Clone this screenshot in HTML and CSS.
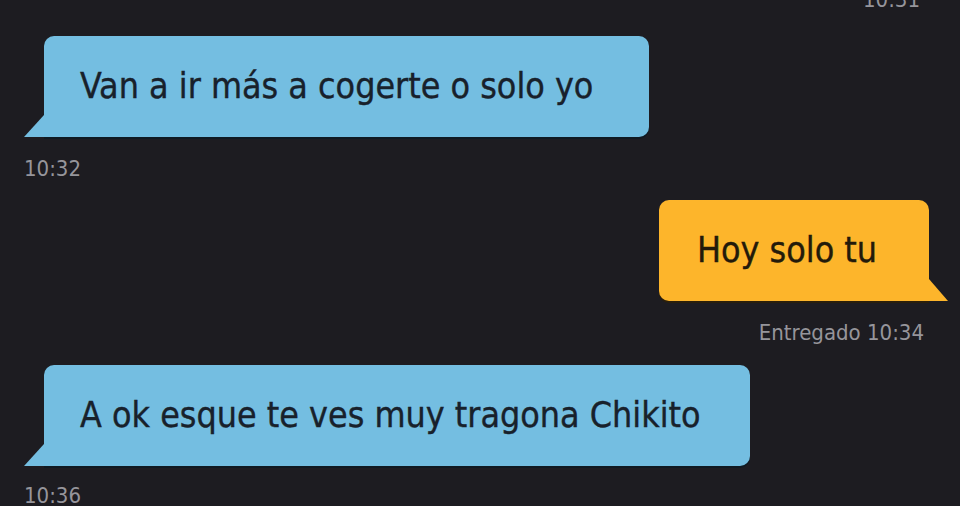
FILE: index.html
```html
<!DOCTYPE html>
<html lang="es">
<head>
<meta charset="utf-8">
<title>Chat</title>
<link rel="stylesheet" href="styles.css">
</head>
<body>
<main class="chat">
  <div class="stamp stamp-top">10:31</div>

  <div class="row row-in">
    <div class="bubble bubble-in bubble-1"><span class="text">Van a ir más a cogerte o solo yo</span></div>
  </div>
  <div class="stamp stamp-in">10:32</div>

  <div class="row row-out">
    <div class="bubble bubble-out"><span class="text">Hoy solo tu</span></div>
  </div>
  <div class="stamp stamp-out">Entregado 10:34</div>

  <div class="row row-in">
    <div class="bubble bubble-in bubble-2"><span class="text">A ok esque te ves muy tragona Chikito</span></div>
  </div>
  <div class="stamp stamp-in stamp-last">10:36</div>
</main>
</body>
</html>
```

FILE: styles.css
```css
html, body {
  margin: 0;
  padding: 0;
  background: #1d1c21;
  height: 100%;
  overflow: hidden;
}

.chat {
  display: flex;
  flex-direction: column;
  font-family: "DejaVu Sans Condensed", "DejaVu Sans", sans-serif;
  font-stretch: condensed;
}

.stamp {
  color: #96959b;
  font-size: 22px;
  line-height: 24px;
  height: 24px;
}

.stamp-top {
  align-self: flex-end;
  margin-top: -12px;
  margin-right: 40px;
}

.stamp-in {
  margin-left: 24px;
  margin-top: 20px;
}

.stamp-last {
  margin-top: 18px;
}

.stamp-out {
  align-self: flex-end;
  margin-right: 36px;
  margin-top: 20px;
}

.row {
  display: flex;
}

.row-in {
  justify-content: flex-start;
  padding-left: 44px;
}

.row-out {
  justify-content: flex-end;
  padding-right: 31px;
}

.bubble {
  position: relative;
  height: 101px;
  display: flex;
  align-items: center;
  box-sizing: border-box;
  border-radius: 10px;
  color: #18212b;
  font-size: 35.5px;
  -webkit-text-stroke: 0.35px #18212b;
  white-space: nowrap;
  box-shadow: 0 2px 0 #0f1a22;
}

.bubble .text {
  position: relative;
  top: -1px;
}

.bubble-in {
  background: #74bee1;
  border-bottom-left-radius: 0;
  padding-left: 36px;
}

.bubble-1 {
  width: 605px;
  margin-top: 24px;
}

.bubble-2 {
  width: 706px;
  margin-top: 20px;
}

.bubble-in::before {
  content: "";
  position: absolute;
  left: -20px;
  bottom: 0;
  width: 0;
  height: 0;
  border-bottom: 22px solid #74bee1;
  border-left: 20px solid transparent;
}

.bubble-out {
  background: #fdb52b;
  border-bottom-right-radius: 0;
  padding-left: 38px;
  width: 270px;
  margin-top: 19px;
  color: #231a0a;
  -webkit-text-stroke: 0.35px #231a0a;
  box-shadow: 0 2px 0 #2a1f0c;
}

.bubble-out::after {
  content: "";
  position: absolute;
  right: -19px;
  bottom: 0;
  width: 0;
  height: 0;
  border-bottom: 22px solid #fdb52b;
  border-right: 19px solid transparent;
}
```
